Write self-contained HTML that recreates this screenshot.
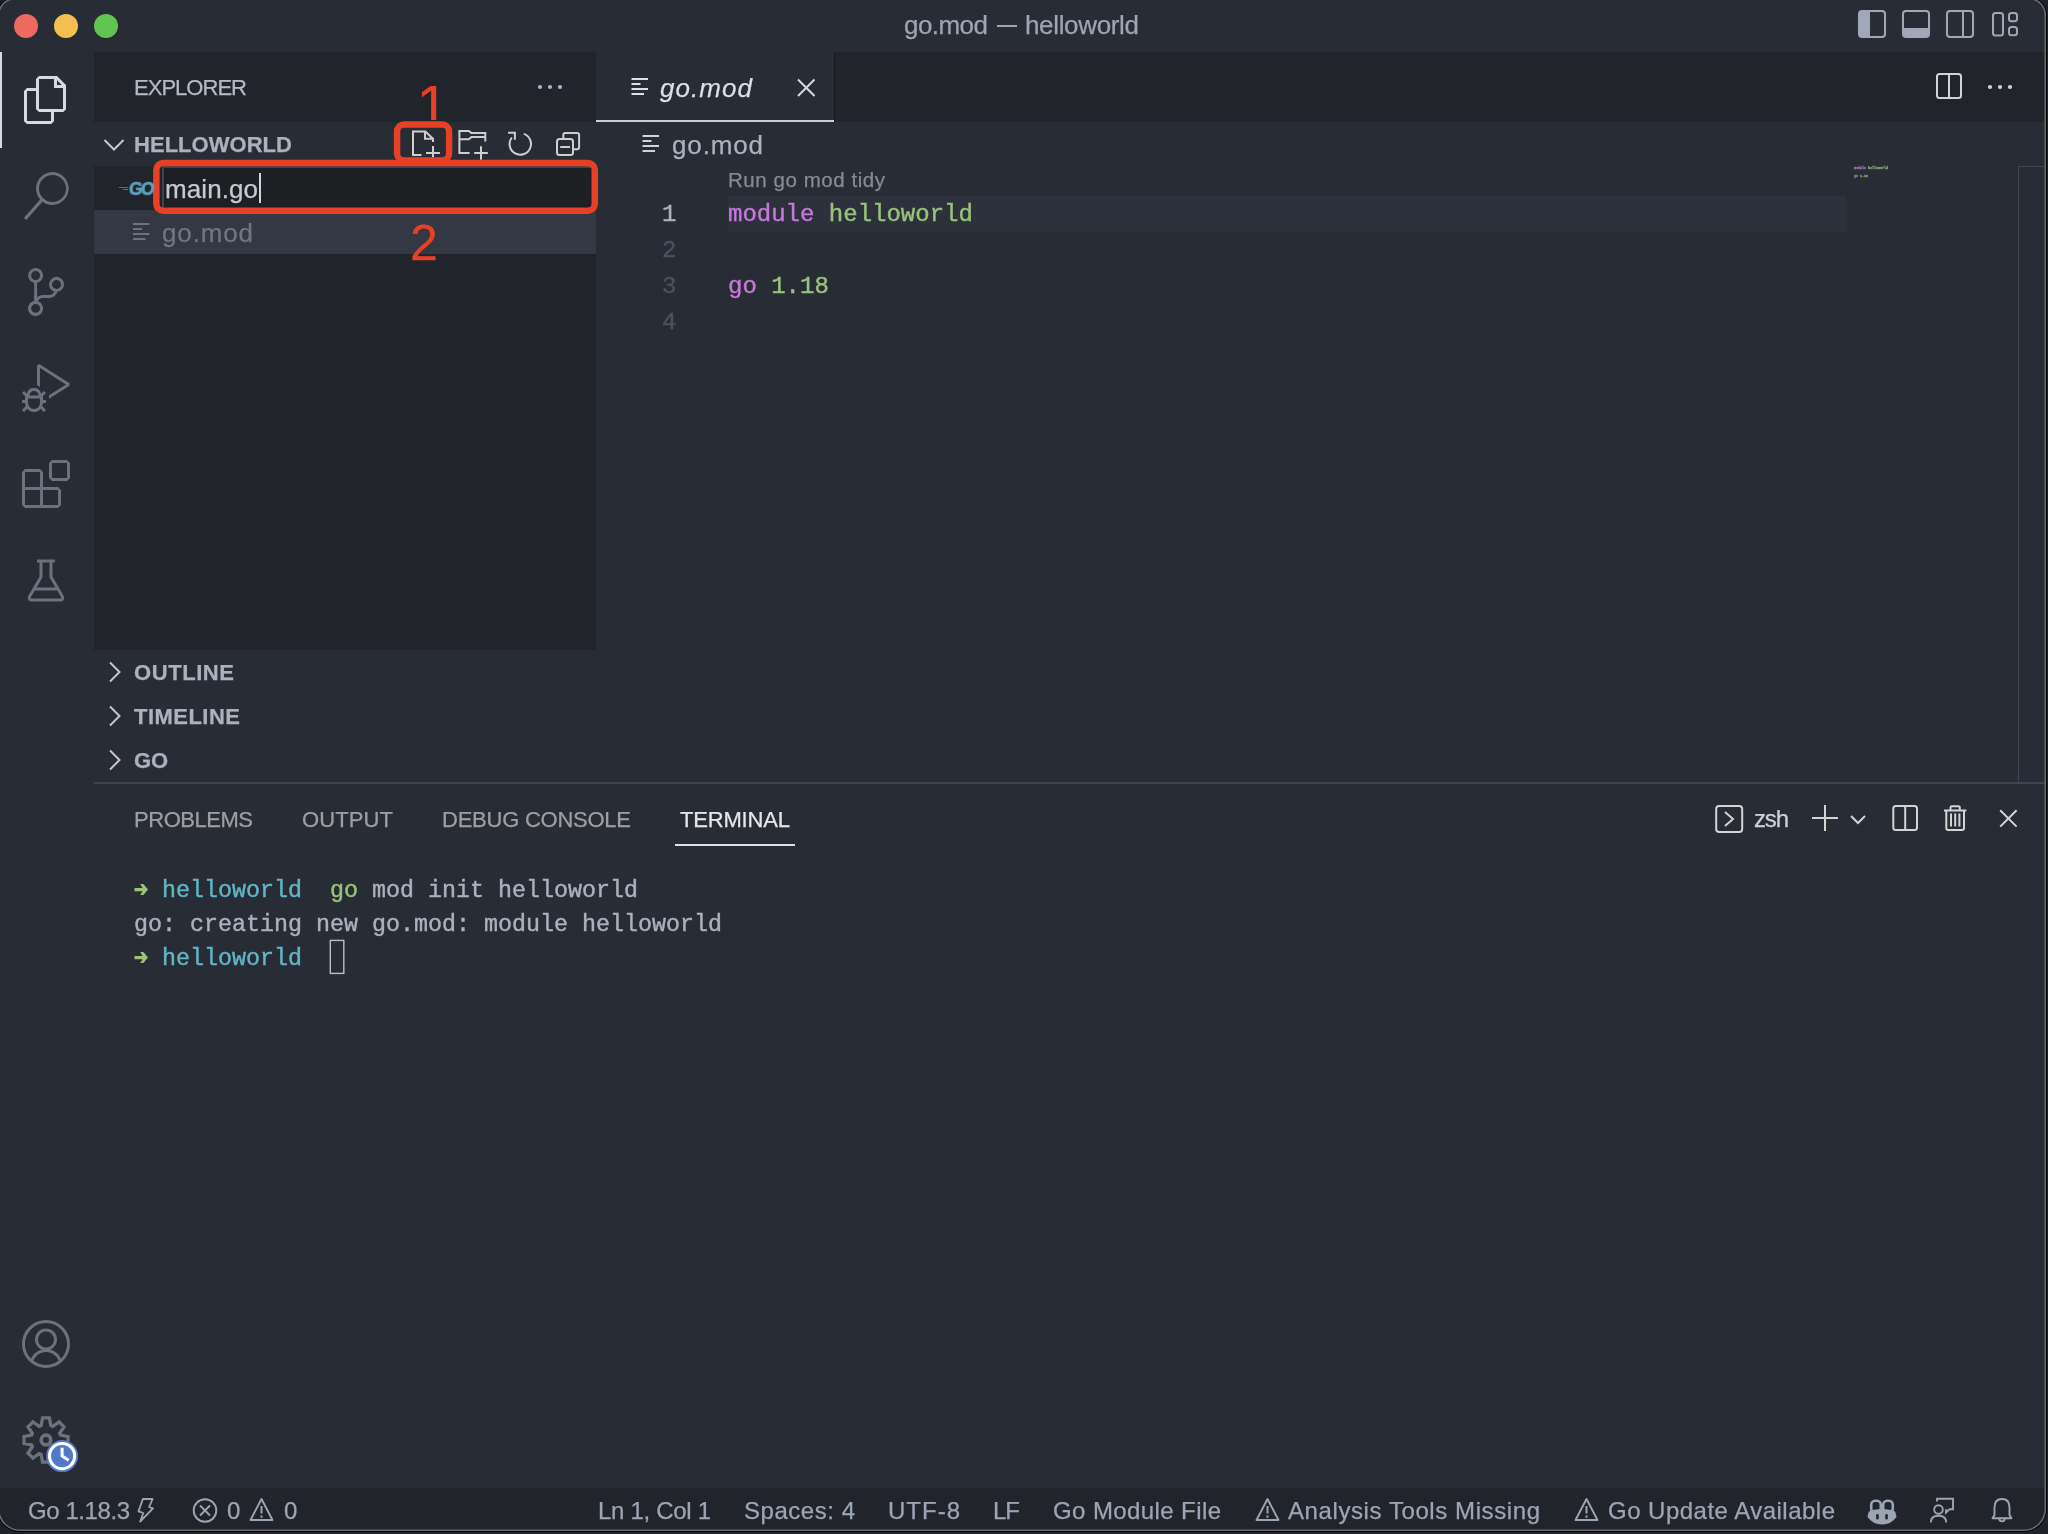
<!DOCTYPE html>
<html><head><meta charset="utf-8"><title>go.mod — helloworld</title><style>
*{box-sizing:border-box;margin:0;padding:0}
html,body{width:2048px;height:1534px;overflow:hidden;background:#202228}
body{font-family:"Liberation Sans",sans-serif;position:relative}
#win{position:absolute;left:-2px;top:-2px;width:2048px;height:1533px;border-radius:17px 17px 22px 22px;background:#282c34;overflow:hidden;box-shadow:0 0 0 1px #000}
#rim{position:absolute;left:-2px;top:-2px;width:2048px;height:1533px;border-radius:17px 17px 22px 22px;box-shadow:inset 0 0 0 1.5px #686a6f;pointer-events:none}
#c{position:absolute;left:2px;top:2px;width:2046px;height:1531px}
.b{position:absolute}
.t,.m{will-change:transform}
.t{-webkit-text-stroke:0.25px currentColor}
.m span{-webkit-text-stroke:0.4px currentColor}
.t{position:absolute;white-space:nowrap;line-height:40px;height:40px}
.m{position:absolute;white-space:pre;font-family:"Liberation Mono",monospace}
</style></head><body>
<div id="win"><div id="c">
<div class="b" style="left:0px;top:0px;width:2046px;height:52px;background:#282c34;"></div>
<div class="b" style="left:0px;top:52px;width:94px;height:1436px;background:#282c34;"></div>
<div class="b" style="left:94px;top:52px;width:502px;height:70px;background:#21252b;"></div>
<div class="b" style="left:94px;top:122px;width:502px;height:44px;background:#282c34;"></div>
<div class="b" style="left:94px;top:166px;width:502px;height:484px;background:#21252b;"></div>
<div class="b" style="left:94px;top:210px;width:502px;height:44px;background:#333842;"></div>
<div class="b" style="left:94px;top:650px;width:502px;height:132px;background:#282c34;"></div>
<div class="b" style="left:596px;top:52px;width:1449px;height:70px;background:#21252b;"></div>
<div class="b" style="left:596px;top:52px;width:238px;height:70px;background:#282c34;"></div>
<div class="b" style="left:834px;top:52px;width:1px;height:70px;background:#181a1f;"></div>
<div class="b" style="left:596px;top:120px;width:238px;height:2px;background:#cfcfcf;"></div>
<div class="b" style="left:596px;top:122px;width:1449px;height:660px;background:#282c34;"></div>
<div class="b" style="left:728px;top:196px;width:1118px;height:36px;background:#2c313c;"></div>
<div class="b" style="left:2018px;top:166px;width:1px;height:616px;background:#3e4452;"></div>
<div class="b" style="left:2018px;top:166px;width:27px;height:1px;background:#3e4452;"></div>
<div class="b" style="left:94px;top:782px;width:1951px;height:2px;background:#3e4452;"></div>
<div class="b" style="left:94px;top:784px;width:1951px;height:704px;background:#282c34;"></div>
<div class="b" style="left:675px;top:844px;width:120px;height:2px;background:#e0e0e0;"></div>
<div class="b" style="left:0px;top:1488px;width:2046px;height:44px;background:#21252b;"></div>
<div class="b" style="left:0px;top:52px;width:2px;height:96px;background:#d7dae0;"></div>
<div class="b" style="left:997px;top:24.5px;width:20px;height:2px;background:#9da5b4;"></div>
<div class="b" style="left:14px;top:14px;width:24px;height:24px;border-radius:50%;background:#ec6a5e"></div>
<div class="b" style="left:54px;top:14px;width:24px;height:24px;border-radius:50%;background:#f4bf4f"></div>
<div class="b" style="left:94px;top:14px;width:24px;height:24px;border-radius:50%;background:#61c554"></div>
<svg style="position:absolute;left:22px;top:76px" width="48" height="48" viewBox="0 0 24 24" ><path fill="#d7dae0" d="M17.5 0h-9L7 1.5V6H2.5L1 7.5v15.07L2.5 24h12.07L16 22.57V18h4.7l1.3-1.43V4.5L17.5 0zm0 2.12l2.38 2.38H17.5V2.12zm-3 20.38h-12v-15H7v9.07L8.5 18h6v4.5zm6-6h-12v-15H16V6h4.5v10.5z"/></svg>
<svg style="position:absolute;left:22px;top:172px" width="48" height="48" viewBox="0 0 24 24" ><path fill="#6b717d" d="M15.25 0a8.25 8.25 0 0 0-6.18 13.72L1 22.88l1.12 1.12 8.05-9.12A8.251 8.251 0 1 0 15.25.01V0zm0 15a6.75 6.75 0 1 1 0-13.5 6.75 6.75 0 0 1 0 13.5z"/></svg>
<svg style="position:absolute;left:22px;top:268px" width="48" height="48" viewBox="0 0 24 24" ><path fill="#6b717d" d="M21.007 8.222A3.738 3.738 0 0 0 15.045 5.2a3.737 3.737 0 0 0 1.156 6.583 2.988 2.988 0 0 1-2.668 1.67h-2.99a4.456 4.456 0 0 0-2.989 1.165V7.4a3.737 3.737 0 1 0-1.494 0v9.117a3.776 3.776 0 1 0 1.816.099 2.99 2.99 0 0 1 2.668-1.667h2.99a4.484 4.484 0 0 0 4.223-3.039 3.736 3.736 0 0 0 3.25-3.687zM4.565 3.738a2.242 2.242 0 1 1 4.484 0 2.242 2.242 0 0 1-4.484 0zm4.484 16.441a2.242 2.242 0 1 1-4.484 0 2.242 2.242 0 0 1 4.484 0zm8.221-9.715a2.242 2.242 0 1 1 0-4.485 2.242 2.242 0 0 1 0 4.485z"/></svg>
<svg style="position:absolute;left:22px;top:364px" width="48" height="48" viewBox="0 0 24 24" ><path fill="#6b717d" d="M10.94 13.5l-1.32 1.32a3.73 3.73 0 0 0-7.24 0L1.06 13.5 0 14.56l1.72 1.72-.22.22V18H0v1.5h1.5v.08c.077.489.214.966.41 1.42L0 22.94 1.06 24l1.65-1.65A4.308 4.308 0 0 0 6 24a4.31 4.31 0 0 0 3.29-1.65L10.94 24 12 22.94 10.09 21c.198-.464.336-.951.41-1.45v-.1H12V18h-1.5v-1.5l-.22-.22L12 14.56l-1.06-1.06zM6 13.5a2.25 2.25 0 0 1 2.25 2.25h-4.5A2.25 2.25 0 0 1 6 13.5zm3 6a3.33 3.33 0 0 1-3 3 3.33 3.33 0 0 1-3-3v-2.25h6v2.25zm14.76-9.9v1.26L13.5 17.37V15.6l8.5-5.37L9 2v9.46a5.07 5.07 0 0 0-1.5-.72V.63L8.64 0l15.12 9.6z"/></svg>
<svg style="position:absolute;left:22px;top:460px" width="48" height="48" viewBox="0 0 24 24" ><path fill="#6b717d" d="M13.5 1.5L15 0h7.5L24 1.5V9l-1.5 1.5H15L13.5 9V1.5zm1.5 0V9h7.5V1.5H15zM0 15V6l1.5-1.5H9L10.5 6v7.5H18l1.5 1.5v7.5L18 24H1.5L0 22.5V15zm9-1.5V6H1.5v7.5H9zM9 15H1.5v7.5H9V15zm1.5 7.5H18V15h-7.5v7.5z"/></svg>
<svg style="position:absolute;left:22px;top:556px" width="48" height="48" viewBox="0 0 48 48" ><path d="M15 5H33" fill="none" stroke="#6b717d" stroke-width="3" /><path d="M19 5V21L7.6 40.5Q6.2 44 10 44H38Q41.8 44 40.4 40.5L29 21V5" fill="none" stroke="#6b717d" stroke-width="3" stroke-linejoin="round"/><path d="M12 33H36" fill="none" stroke="#6b717d" stroke-width="3" /></svg>
<svg style="position:absolute;left:22px;top:1320px" width="48" height="48" viewBox="0 0 48 48" ><defs><clipPath id="acc"><circle cx="24" cy="24" r="22.5"/></clipPath></defs><circle cx="24" cy="24" r="22.5" fill="none" stroke="#6b717d" stroke-width="3"/><circle cx="24" cy="19.5" r="9.5" fill="none" stroke="#6b717d" stroke-width="3"/><circle cx="24" cy="45.5" r="15" fill="none" stroke="#6b717d" stroke-width="3" clip-path="url(#acc)"/></svg>
<svg style="position:absolute;left:22px;top:1416px" width="48" height="48" viewBox="0 0 48 48" ><path d="M19.13 9.60 L20.59 1.96 L27.41 1.96 L28.87 9.60 L30.73 10.37 L37.17 6.00 L42.00 10.83 L37.63 17.27 L38.40 19.13 L46.04 20.59 L46.04 27.41 L38.40 28.87 L37.63 30.73 L42.00 37.17 L37.17 42.00 L30.73 37.63 L28.87 38.40 L27.41 46.04 L20.59 46.04 L19.13 38.40 L17.27 37.63 L10.83 42.00 L6.00 37.17 L10.37 30.73 L9.60 28.87 L1.96 27.41 L1.96 20.59 L9.60 19.13 L10.37 17.27 L6.00 10.83 L10.83 6.00 L17.27 10.37Z" fill="none" stroke="#6b717d" stroke-width="3.3" stroke-linejoin="miter"/><circle cx="24" cy="24" r="4.8" fill="none" stroke="#6b717d" stroke-width="3.7"/></svg>
<svg style="position:absolute;left:44px;top:1438px" width="36" height="36" viewBox="0 0 36 36" ><circle cx="18.1" cy="18.1" r="16" fill="#5478c9"/><circle cx="18.1" cy="18.1" r="12.6" fill="none" stroke="#fff" stroke-width="3.1"/><path d="M18.1 9.8V18L24.6 22.2" fill="none" stroke="#fff" stroke-width="3"/></svg>
<div class="m" style="left:1854px;top:163.6px;height:8px;line-height:8px;font-size:3.34px;font-weight:700;opacity:.85"><span style="color:#b36fc8;-webkit-text-stroke:0.35px #b36fc8">module</span><span style="color:#8db070;-webkit-text-stroke:0.35px #8db070"> helloworld</span></div>
<div class="m" style="left:1854px;top:171.8px;height:8px;line-height:8px;font-size:3.34px;font-weight:700;opacity:.85"><span style="color:#b36fc8;-webkit-text-stroke:0.35px #b36fc8">go</span><span style="color:#8db070;-webkit-text-stroke:0.35px #8db070"> 1.18</span></div>
<div class="b" style="left:162px;top:166px;width:434px;height:44px;background:#1d1f23;border:2px solid #3b4454"></div>
<div class="b" style="left:259px;top:173px;width:2px;height:30px;background:#d0d4dc;"></div>
<svg style="position:absolute;left:0;top:0px" width="2045" height="1532" viewBox="0 0 2045 1532"><rect x="1859" y="11" width="26" height="26" rx="3" fill="none" stroke="#a0a8b8" stroke-width="2"/><path d="M1859 13Q1859 11 1861 11H1870V37H1861Q1859 37 1859 35Z" fill="#a0a8b8"/><rect x="1903" y="11" width="26" height="26" rx="3" fill="none" stroke="#a0a8b8" stroke-width="2"/><path d="M1903 28H1929V35Q1929 37 1927 37H1905Q1903 37 1903 35Z" fill="#a0a8b8"/><rect x="1947" y="11" width="26" height="26" rx="3" fill="none" stroke="#a0a8b8" stroke-width="2"/><path d="M1963 11V37" stroke="#a0a8b8" stroke-width="2"/><rect x="1993" y="13" width="10" height="22.5" rx="2.5" fill="none" stroke="#a0a8b8" stroke-width="2"/><rect x="2009" y="13" width="8" height="8.2" rx="2.5" fill="none" stroke="#a0a8b8" stroke-width="2"/><rect x="2009" y="27" width="8" height="8.2" rx="2.5" fill="none" stroke="#a0a8b8" stroke-width="2"/><rect x="1937" y="74" width="24" height="24" rx="2.5" fill="none" stroke="#d4d4d4" stroke-width="2"/><path d="M1949 74V98" stroke="#d4d4d4" stroke-width="2"/><circle cx="1990" cy="87" r="2.1" fill="#d4d4d4"/><circle cx="2000" cy="87" r="2.1" fill="#d4d4d4"/><circle cx="2010" cy="87" r="2.1" fill="#d4d4d4"/><circle cx="540" cy="87" r="2.1" fill="#abb2bf"/><circle cx="550" cy="87" r="2.1" fill="#abb2bf"/><circle cx="560" cy="87" r="2.1" fill="#abb2bf"/><path d="M798 79.5L814.5 96M814.5 79.5L798 96" fill="none" stroke="#d7dae0" stroke-width="2" /><path d="M104.5 140L114 149.5L123.5 140" fill="none" stroke="#c8c8c8" stroke-width="2" /><path d="M110 662.5L119.5 672L110 681.5" fill="none" stroke="#c8c8c8" stroke-width="2" /><path d="M110 706.5L119.5 716L110 725.5" fill="none" stroke="#c8c8c8" stroke-width="2" /><path d="M110 750.5L119.5 760L110 769.5" fill="none" stroke="#c8c8c8" stroke-width="2" /><path d="M421.5 155H413V131.5H425.4L433 138.7V142M425 131.5V138.7H433M426 153H440M433 146V157.5" fill="none" stroke="#cfcfcf" stroke-width="2" /><path d="M469.6 153H459.4V130.9H468.9L471.4 133.1H485.3V141.6M459.4 139.2H468.9L471.4 137H485.3M474.2 153H487.8M481 146.2V159.8" fill="none" stroke="#cfcfcf" stroke-width="2" /><path d="M523.8 133.9A10.7 10.7 0 1 1 511.8 137.5" fill="none" stroke="#cfcfcf" stroke-width="2" /><path d="M508.1 132.7H514.9V139.8" fill="none" stroke="#cfcfcf" stroke-width="2" /><path d="M563.3 138V135.1Q563.3 133.1 565.3 133.1H577.1Q579.1 133.1 579.1 135.1V147.2Q579.1 149.2 577.1 149.2H574" fill="none" stroke="#cfcfcf" stroke-width="2" /><rect x="557" y="139" width="16" height="16" rx="2.5" fill="none" stroke="#cfcfcf" stroke-width="2"/><path d="M560.2 147H570" fill="none" stroke="#cfcfcf" stroke-width="2" /><rect x="631.5" y="78" width="16.5" height="2" fill="#dcdfe4"/><rect x="631.5" y="83" width="9" height="2" fill="#dcdfe4"/><rect x="631.5" y="88" width="16.5" height="2" fill="#dcdfe4"/><rect x="631.5" y="93" width="12.5" height="2" fill="#dcdfe4"/><rect x="642.5" y="135" width="16.5" height="2" fill="#d0d3d8"/><rect x="642.5" y="140" width="9" height="2" fill="#d0d3d8"/><rect x="642.5" y="145" width="16.5" height="2" fill="#d0d3d8"/><rect x="642.5" y="150" width="12.5" height="2" fill="#d0d3d8"/><rect x="133" y="223" width="16.5" height="2" fill="#6b717d"/><rect x="133" y="228" width="9" height="2" fill="#6b717d"/><rect x="133" y="233" width="16.5" height="2" fill="#6b717d"/><rect x="133" y="238" width="12.5" height="2" fill="#6b717d"/><rect x="1716.2" y="806" width="26" height="26" rx="3" fill="none" stroke="#d4d4d4" stroke-width="2"/><path d="M1725 812L1733 819L1725 826" fill="none" stroke="#d4d4d4" stroke-width="2" /><path d="M1812 818H1838M1825 805V831" fill="none" stroke="#d4d4d4" stroke-width="2" /><path d="M1851 816L1858 823L1865 816" fill="none" stroke="#d4d4d4" stroke-width="2" /><rect x="1893.3" y="806" width="23.7" height="24" rx="2.5" fill="none" stroke="#d4d4d4" stroke-width="2"/><path d="M1905.2 806V830" fill="none" stroke="#d4d4d4" stroke-width="2" /><path d="M1944 810.6H1966.3M1950.5 810.6V807.5Q1950.5 806.2 1952 806.2H1958.3Q1959.8 806.2 1959.8 807.5V810.6M1946.3 810.6V828Q1946.3 830 1948.3 830H1962Q1964 830 1964 828V810.6M1951 813.5V826.5M1955.2 813.5V826.5M1959.4 813.5V826.5" fill="none" stroke="#d4d4d4" stroke-width="2" /><path d="M2000.2 810.2L2016.6 826.6M2016.6 810.2L2000.2 826.6" fill="none" stroke="#d4d4d4" stroke-width="2" /><path d="M134.5 887.9H142.6L140.2 884.1H143.4L148 889.6L143.4 895.1H140.2L142.6 891.3000000000001H134.5Z" fill="#98c379"/><path d="M134.5 955.9H142.6L140.2 952.1H143.4L148 957.6L143.4 963.1H140.2L142.6 959.3000000000001H134.5Z" fill="#98c379"/><rect x="330.3" y="940.4" width="13.5" height="33" fill="none" stroke="#b8bec9" stroke-width="1.4"/><path d="M142.9 1499H152.6L149.1 1507L153 1508.3L140.2 1521.5L143.3 1513L138.5 1511.4Z" fill="none" stroke="#9da5b4" stroke-width="1.8" stroke-linejoin="round"/><circle cx="205" cy="1510.5" r="11.3" fill="none" stroke="#9da5b4" stroke-width="1.9"/><path d="M200 1505.5L210 1515.5M210 1505.5L200 1515.5" fill="none" stroke="#9da5b4" stroke-width="1.9" /><path d="M261.5 1499L272.5 1520H250.5Z" fill="none" stroke="#9da5b4" stroke-width="1.9" stroke-linejoin="round"/><path d="M261.5 1506V1513.5M261.5 1515.5V1517.8" fill="none" stroke="#9da5b4" stroke-width="2" /><path d="M1267.5 1499L1278.5 1520H1256.5Z" fill="none" stroke="#9da5b4" stroke-width="1.9" stroke-linejoin="round"/><path d="M1267.5 1506V1513.5M1267.5 1515.5V1517.8" fill="none" stroke="#9da5b4" stroke-width="2" /><path d="M1586.5 1499L1597.5 1520H1575.5Z" fill="none" stroke="#9da5b4" stroke-width="1.9" stroke-linejoin="round"/><path d="M1586.5 1506V1513.5M1586.5 1515.5V1517.8" fill="none" stroke="#9da5b4" stroke-width="2" /><rect x="1871.2" y="1500.7" width="9.6" height="11.5" rx="4" fill="none" stroke="#9da5b4" stroke-width="2.6"/><rect x="1883.2" y="1500.7" width="9.6" height="11.5" rx="4" fill="none" stroke="#9da5b4" stroke-width="2.6"/><path d="M1870 1510.5Q1867.5 1513 1867.5 1517Q1873 1524.5 1882 1524.5Q1891 1524.5 1896.5 1517Q1896.5 1513 1894 1510.5Q1888 1509 1882 1509Q1876 1509 1870 1510.5Z" fill="#9da5b4"/><rect x="1876.2" y="1514" width="2.5" height="5.5" rx="1.2" fill="#21252b"/><rect x="1885.3" y="1514" width="2.5" height="5.5" rx="1.2" fill="#21252b"/><circle cx="1938.5" cy="1509.5" r="4.3" fill="none" stroke="#9da5b4" stroke-width="1.9"/><path d="M1930.8 1522.5Q1930.8 1515.8 1938.5 1515.8Q1946.2 1515.8 1946.2 1522.5" fill="none" stroke="#9da5b4" stroke-width="1.9" /><path d="M1937 1501.5V1498.8H1953V1509.3H1949.5L1946 1512.5V1509.3" fill="none" stroke="#9da5b4" stroke-width="1.9" /><path d="M1992.5 1518.3H2011.5L2009.5 1515V1507.5Q2009.5 1499 2002 1499Q1994.5 1499 1994.5 1507.5V1515Z" fill="none" stroke="#9da5b4" stroke-width="1.9" stroke-linejoin="round"/><path d="M1999.3 1518.8Q1999.3 1521.4 2002 1521.4Q2004.7 1521.4 2004.7 1518.8" fill="none" stroke="#9da5b4" stroke-width="1.9" /><rect x="397.1" y="124.5" width="52" height="36" rx="7" fill="none" stroke="#e84025" stroke-width="6.4"/><rect x="156.35" y="163.05" width="438.4" height="47.7" rx="7" fill="none" stroke="#e84025" stroke-width="6.5"/><path d="M436.2 86H430.6L421.9 92.2V97.2L431.1 90.8V120H436.2Z" fill="#e84025"/></svg>
<div class="t" style="left:128.5px;top:168.5px;font-size:17.5px;font-weight:700;color:#5e9fc2;letter-spacing:-1.5px;transform:skewX(-6deg);-webkit-text-stroke:0.6px #5e9fc2">GO</div>
<div class="b" style="left:119px;top:186.5px;width:9px;height:1px;background:#3f7893;"></div><div class="b" style="left:123px;top:188.5px;width:5px;height:1px;background:#3f7893;"></div>
<div class="t" style="left:410px;top:213px;height:60px;line-height:60px;font-size:50px;color:#e84025">2</div>
<div class="m" style="left:728px;top:197.0px;height:36px;line-height:36px;font-size:24px"><span style="color:#c678dd">module</span><span style="color:#98c379"> helloworld</span></div>
<div class="m" style="left:728px;top:269.0px;height:36px;line-height:36px;font-size:24px"><span style="color:#c678dd">go</span><span style="color:#98c379"> 1.18</span></div>
<div class="m" style="left:661.5px;top:197.0px;height:36px;line-height:36px;font-size:24px"><span style="color:#abb2bf">1</span></div>
<div class="m" style="left:661.5px;top:233.0px;height:36px;line-height:36px;font-size:24px"><span style="color:#495162">2</span></div>
<div class="m" style="left:661.5px;top:269.0px;height:36px;line-height:36px;font-size:24px"><span style="color:#495162">3</span></div>
<div class="m" style="left:661.5px;top:305.0px;height:36px;line-height:36px;font-size:24px"><span style="color:#495162">4</span></div>
<div class="m" style="left:134px;top:874.0px;height:34px;line-height:34px;font-size:23.34px"><span style="color:#62b6c5">  helloworld</span><span style="color:#98c379">  go</span><span style="color:#abb2bf"> mod init helloworld</span></div>
<div class="m" style="left:134px;top:908.0px;height:34px;line-height:34px;font-size:23.34px"><span style="color:#abb2bf">go: creating new go.mod: module helloworld</span></div>
<div class="m" style="left:134px;top:942.0px;height:34px;line-height:34px;font-size:23.34px"><span style="color:#62b6c5">  helloworld</span></div>
<div class="t" style="left:904px;top:5px;font-family:'Liberation Sans', sans-serif;font-size:26px;font-weight:400;font-style:normal;color:#9da5b4;letter-spacing:-0.547px">go.mod</div>
<div class="t" style="left:1025px;top:5px;font-family:'Liberation Sans', sans-serif;font-size:26px;font-weight:400;font-style:normal;color:#9da5b4;letter-spacing:-0.342px">helloworld</div>
<div class="t" style="left:134px;top:67.7px;font-family:'Liberation Sans', sans-serif;font-size:22px;font-weight:400;font-style:normal;color:#b4bac6;letter-spacing:-0.975px">EXPLORER</div>
<div class="t" style="left:134px;top:124.69999999999999px;font-family:'Liberation Sans', sans-serif;font-size:22px;font-weight:700;font-style:normal;color:#abb2bf;letter-spacing:0.038px">HELLOWORLD</div>
<div class="t" style="left:165px;top:169px;font-family:'Liberation Sans', sans-serif;font-size:26px;font-weight:400;font-style:normal;color:#c6cad2;letter-spacing:0.083px">main.go</div>
<div class="t" style="left:162px;top:213px;font-family:'Liberation Sans', sans-serif;font-size:26px;font-weight:400;font-style:normal;color:#6f7581;letter-spacing:0.853px">go.mod</div>
<div class="t" style="left:134px;top:652.7px;font-family:'Liberation Sans', sans-serif;font-size:22px;font-weight:700;font-style:normal;color:#abb2bf;letter-spacing:0.573px">OUTLINE</div>
<div class="t" style="left:134px;top:696.7px;font-family:'Liberation Sans', sans-serif;font-size:22px;font-weight:700;font-style:normal;color:#abb2bf;letter-spacing:0.475px">TIMELINE</div>
<div class="t" style="left:134px;top:740.7px;font-family:'Liberation Sans', sans-serif;font-size:22px;font-weight:700;font-style:normal;color:#abb2bf;letter-spacing:-0.234px">GO</div>
<div class="t" style="left:660px;top:68px;font-family:'Liberation Sans', sans-serif;font-size:26px;font-weight:400;font-style:italic;color:#dcdfe4;letter-spacing:1.053px">go.mod</div>
<div class="t" style="left:672px;top:125px;font-family:'Liberation Sans', sans-serif;font-size:26px;font-weight:400;font-style:normal;color:#abb2bf;letter-spacing:0.853px">go.mod</div>
<div class="t" style="left:728px;top:160px;font-family:'Liberation Sans', sans-serif;font-size:20.5px;font-weight:400;font-style:normal;color:#858b96;letter-spacing:0.551px">Run go mod tidy</div>
<div class="t" style="left:134px;top:799.7px;font-family:'Liberation Sans', sans-serif;font-size:22px;font-weight:400;font-style:normal;color:#9f9fa1;letter-spacing:-0.467px">PROBLEMS</div>
<div class="t" style="left:302px;top:799.7px;font-family:'Liberation Sans', sans-serif;font-size:22px;font-weight:400;font-style:normal;color:#9f9fa1;letter-spacing:0.109px">OUTPUT</div>
<div class="t" style="left:442px;top:799.7px;font-family:'Liberation Sans', sans-serif;font-size:22px;font-weight:400;font-style:normal;color:#9f9fa1;letter-spacing:-0.245px">DEBUG CONSOLE</div>
<div class="t" style="left:680px;top:799.7px;font-family:'Liberation Sans', sans-serif;font-size:22px;font-weight:400;font-style:normal;color:#e6e6e6;letter-spacing:-0.179px">TERMINAL</div>
<div class="t" style="left:1754px;top:799px;font-family:'Liberation Sans', sans-serif;font-size:24px;font-weight:400;font-style:normal;color:#cfd2d8;letter-spacing:-1.180px">zsh</div>
<div class="t" style="left:28px;top:1491px;font-family:'Liberation Sans', sans-serif;font-size:24px;font-weight:400;font-style:normal;color:#9da5b4;letter-spacing:-0.428px">Go 1.18.3</div>
<div class="t" style="left:227px;top:1491px;font-family:'Liberation Sans', sans-serif;font-size:24px;font-weight:400;font-style:normal;color:#9da5b4;letter-spacing:-1.359px">0</div>
<div class="t" style="left:284px;top:1491px;font-family:'Liberation Sans', sans-serif;font-size:24px;font-weight:400;font-style:normal;color:#9da5b4;letter-spacing:-1.359px">0</div>
<div class="t" style="left:598px;top:1491px;font-family:'Liberation Sans', sans-serif;font-size:24px;font-weight:400;font-style:normal;color:#9da5b4;letter-spacing:-0.308px">Ln 1, Col 1</div>
<div class="t" style="left:744px;top:1491px;font-family:'Liberation Sans', sans-serif;font-size:24px;font-weight:400;font-style:normal;color:#9da5b4;letter-spacing:0.533px">Spaces: 4</div>
<div class="t" style="left:888px;top:1491px;font-family:'Liberation Sans', sans-serif;font-size:24px;font-weight:400;font-style:normal;color:#9da5b4;letter-spacing:1.000px">UTF-8</div>
<div class="t" style="left:993px;top:1491px;font-family:'Liberation Sans', sans-serif;font-size:24px;font-weight:400;font-style:normal;color:#9da5b4;letter-spacing:-1.016px">LF</div>
<div class="t" style="left:1053px;top:1491px;font-family:'Liberation Sans', sans-serif;font-size:24px;font-weight:400;font-style:normal;color:#9da5b4;letter-spacing:0.404px">Go Module File</div>
<div class="t" style="left:1288px;top:1491px;font-family:'Liberation Sans', sans-serif;font-size:24px;font-weight:400;font-style:normal;color:#9da5b4;letter-spacing:0.588px">Analysis Tools Missing</div>
<div class="t" style="left:1608px;top:1491px;font-family:'Liberation Sans', sans-serif;font-size:24px;font-weight:400;font-style:normal;color:#9da5b4;letter-spacing:0.478px">Go Update Available</div>
</div></div>
<div id="rim"></div>
</body></html>
